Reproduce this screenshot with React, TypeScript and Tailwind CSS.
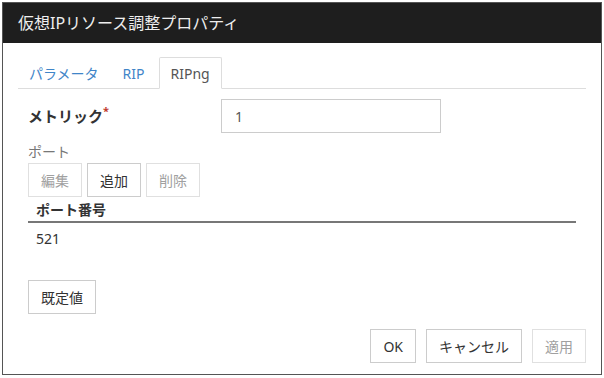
import React from 'react';

const font = { fontFamily: '"Noto Sans", "Noto Sans CJK JP", sans-serif' };

function Btn({ label, disabled = false, className = '' }: { label: string; disabled?: boolean; className?: string }) {
  return (
    <button
      className={`h-[34px] px-[12px] border text-[14px] bg-white flex items-center justify-center ${
        disabled ? 'border-[#e0e0e0] text-[#a0a0a0]' : 'border-[#cccccc] text-[#333333]'
      } ${className}`}
    >
      {label}
    </button>
  );
}

export default function App() {
  return (
    <div className="w-[604px] h-[378px] bg-white p-[2px]" style={font}>
      <div className="w-[600px] h-[373px] border border-[#555555] flex flex-col">
        <div className="h-[40px] bg-[#1e1e1e] text-[#eeeeee] text-[16px] pl-[15px] flex items-center shrink-0">
          仮想IPリソース調整プロパティ
        </div>
        <div className="flex-1 px-[15px] pt-[14px] flex flex-col">
          <div className="flex border-b border-[#dddddd] text-[14px]">
            <div className="h-[32px] -mb-px pl-[11px] pr-[10px] mr-[4px] flex items-center text-[#3f85c8]">パラメータ</div>
            <div className="h-[32px] -mb-px px-[10px] mr-[4px] flex items-center text-[#3f85c8]">RIP</div>
            <div className="h-[32px] -mb-px px-[11px] flex items-center text-[#555555] bg-white border border-[#dddddd] border-b-white rounded-t-[2px]">
              RIPng
            </div>
          </div>

          <div className="px-[10px] text-[14px] text-[#333333]">
            <div className="flex items-center mt-[10px]">
              <div className="w-[193px] font-bold text-[15px]">
                メトリック<span className="text-[#c0392b] text-[11px] align-top relative -top-[2px]">*</span>
              </div>
              <div className="w-[220px] h-[34px] border border-[#cccccc] px-[13px] flex items-center text-[#555555]">1</div>
            </div>

            <div className="mt-[9px] h-[20px] leading-[20px] text-[#777777]">ポート</div>
            <div className="flex gap-[5px] mt-[1px]">
              <Btn label="編集" disabled />
              <Btn label="追加" />
              <Btn label="削除" disabled />
            </div>

            <div className="h-[26px] flex items-center px-[8px] font-bold border-b-2 border-[#777777]">ポート番号</div>
            <div className="h-[30px] flex items-center px-[8px] text-[#333333]">521</div>

            <div className="flex mt-[27px]">
              <Btn label="既定値" />
            </div>
          </div>

          <div className="flex justify-end gap-[10px] mt-[15px]">
            <Btn label="OK" />
            <Btn label="キャンセル" />
            <Btn label="適用" disabled />
          </div>
        </div>
      </div>
    </div>
  );
}
